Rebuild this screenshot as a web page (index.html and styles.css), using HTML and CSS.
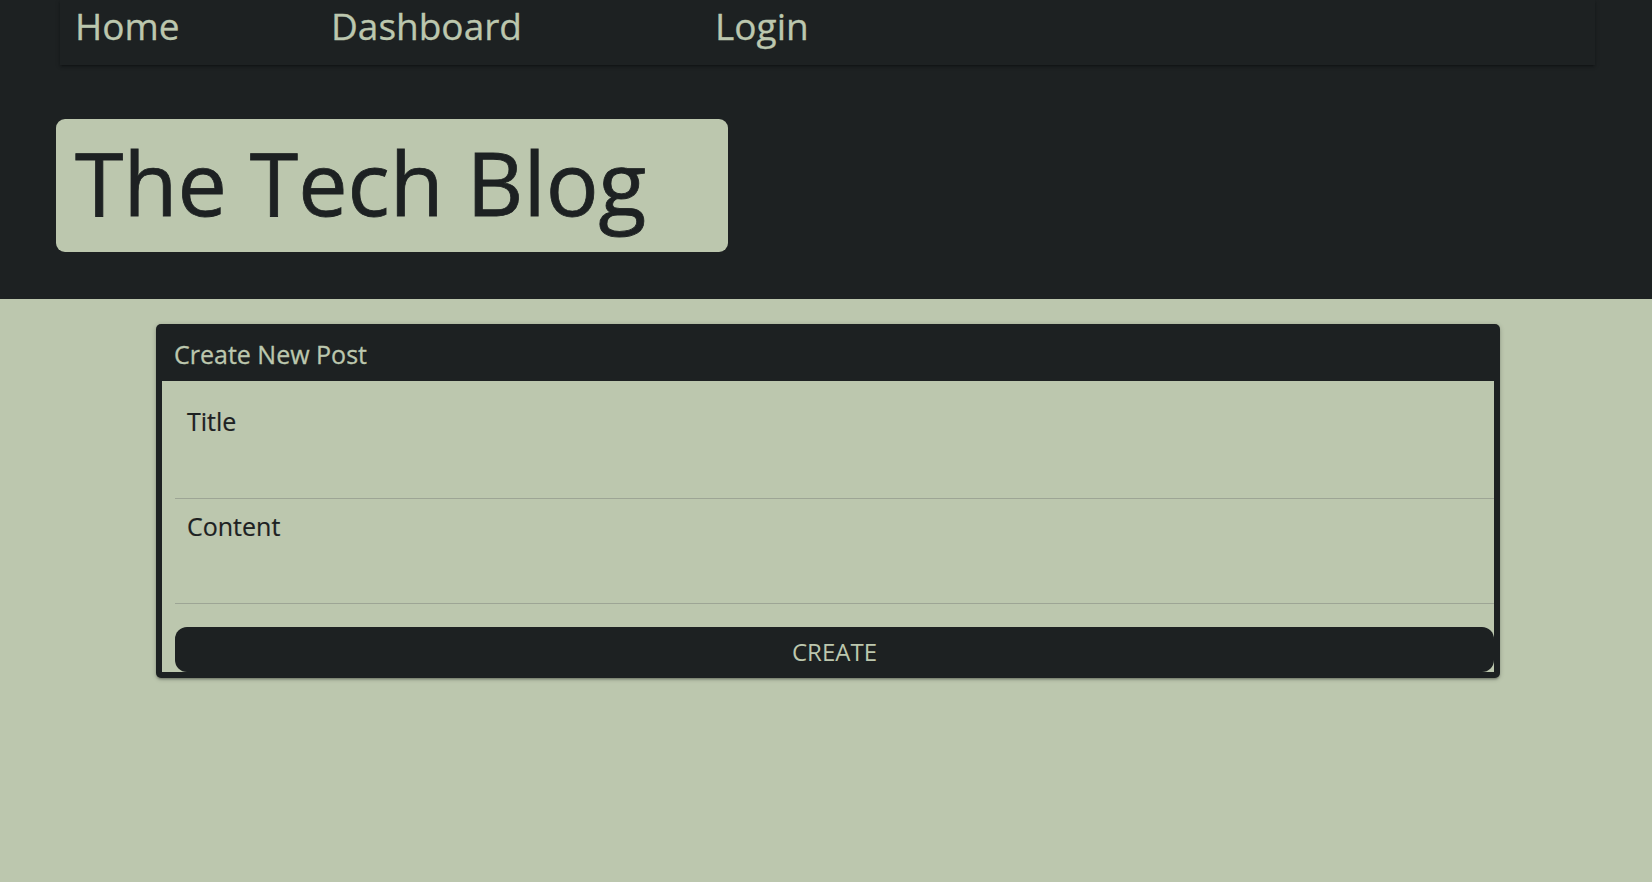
FILE: index.html
```html
<!DOCTYPE html>
<html lang="en">
<head>
<meta charset="utf-8">
<title>The Tech Blog</title>
<link rel="stylesheet" href="styles.css">
</head>
<body>
<header class="site-header">
  <nav class="nav">
    <a class="nav-link" href="#">Home</a>
    <a class="nav-link" href="#">Dashboard</a>
    <a class="nav-link" href="#">Login</a>
  </nav>
  <h1 class="brand">The Tech Blog</h1>
</header>
<main class="main">
  <section class="card">
    <div class="card-title">Create New Post</div>
    <form class="card-body">
      <div class="field">
        <label class="field-label" for="title">Title</label>
        <input class="field-input" id="title" type="text">
      </div>
      <div class="field">
        <label class="field-label" for="content">Content</label>
        <input class="field-input" id="content" type="text">
      </div>
      <button class="btn" type="button">CREATE</button>
    </form>
  </section>
</main>
</body>
</html>
```
FILE: styles.css
```css
* { box-sizing: border-box; }

html, body {
  margin: 0;
  padding: 0;
}

body {
  background: #bcc7ae;
  font-family: "Open Sans", "Liberation Sans", sans-serif;
  color: #1d2122;
  min-height: 882px;
}

.site-header {
  background: #1d2122;
  height: 299px;
  padding-top: 0;
  overflow: hidden;
}

.nav {
  margin: 0 57px 0 60px;
  height: 65px;
  padding-left: 15px;
  display: grid;
  grid-template-columns: 256px 384px auto;
  background: #1d2122;
  box-shadow: 0 2px 2px 0 rgba(0,0,0,.14), 0 3px 1px -2px rgba(0,0,0,.12), 0 1px 5px 0 rgba(0,0,0,.2);
}

.nav-link {
  font-size: 37px;
  line-height: 52px;
  color: #bcc7ae;
  text-decoration: none;
  white-space: nowrap;
  -webkit-text-stroke: 0.3px #bcc7ae;
}

.brand {
  margin: 54px 0 0 56px;
  width: 672px;
  height: 133px;
  padding: 0 0 7px 19px;
  background: #bcc7ae;
  border-radius: 9px;
  font-size: 88px;
  font-weight: 400;
  line-height: 127px;
  color: #1d2122;
  white-space: nowrap;
  -webkit-text-stroke: 0.8px #1d2122;
}

.main {
  padding-top: 25px;
}

.card {
  margin: 0 152px 0 156px;
  background: #1d2122;
  border-radius: 5px;
  padding: 0 6px 6px;
  box-shadow: 0 2px 2px 0 rgba(0,0,0,.14), 0 3px 1px -2px rgba(0,0,0,.12), 0 1px 5px 0 rgba(0,0,0,.2);
}

.card-title {
  height: 57px;
  padding: 4px 0 0 12px;
  font-size: 25px;
  line-height: 52px;
  color: #bcc7ae;
  -webkit-text-stroke: 0.3px #bcc7ae;
}

.card-body {
  margin: 0;
  background: #bcc7ae;
  padding: 13px 0 0 13px;
}

.field {
  height: 105px;
  border-bottom: 1px solid #9da595;
  display: flex;
  flex-direction: column;
}

.field-label {
  display: block;
  padding: 11px 0 0 12px;
  font-size: 25px;
  line-height: 33px;
  color: #1d2122;
  -webkit-text-stroke: 0.2px #1d2122;
}

.field-input {
  flex: 1;
  width: 100%;
  background: transparent;
  border: none;
  outline: none;
  font: inherit;
}

.btn {
  display: block;
  width: 100%;
  margin-top: 23px;
  height: 45px;
  padding: 3px 0 0;
  border: none;
  border-radius: 12px;
  background: #1d2122;
  color: #bcc7ae;
  font-family: "Open Sans", "Liberation Sans", sans-serif;
  font-size: 24px;
  line-height: 41px;
  text-align: center;
}
```
